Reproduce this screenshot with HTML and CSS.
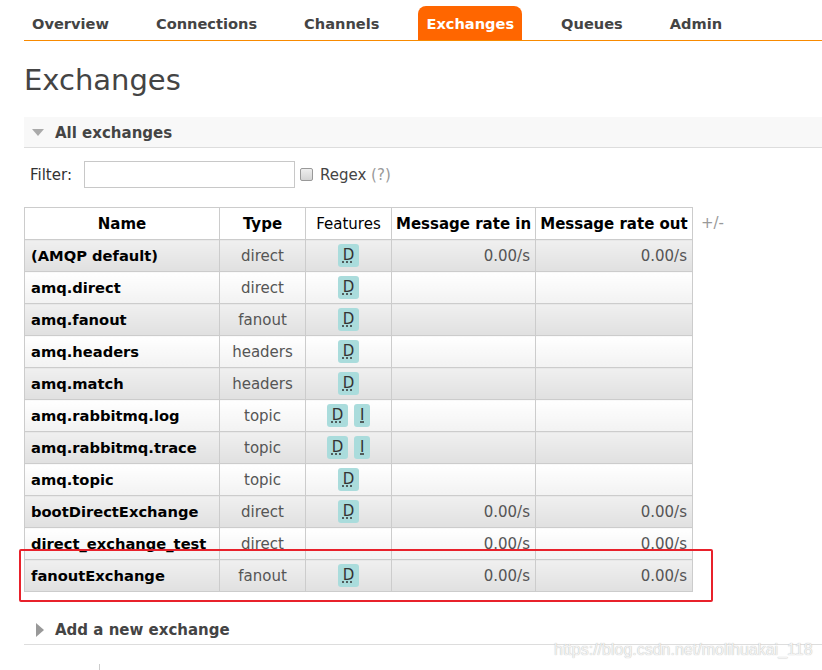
FILE: index.html
```html
<!DOCTYPE html>
<html>
<head>
<meta charset="utf-8">
<title>Exchanges</title>
<link rel="stylesheet" href="styles.css">
</head>
<body>
<div class="nav">
  <ul class="menu">
    <li><a class="menu-item">Overview</a></li>
    <li><a class="menu-item">Connections</a></li>
    <li><a class="menu-item">Channels</a></li>
    <li><a class="menu-item active">Exchanges</a></li>
    <li><a class="menu-item">Queues</a></li>
    <li><a class="menu-item">Admin</a></li>
  </ul>
</div>

<h1 class="title">Exchanges</h1>

<div class="section">
  <div class="section-head"><span class="tri-down"></span><span>All exchanges</span></div>
  <div class="filter">
    <label class="filter-label">Filter:</label>
    <input class="filter-input" type="text">
    <input class="checkbox" type="checkbox">
    <span class="regex">Regex <span class="help">(?)</span></span>
  </div>
  <div class="table-wrap">
    <table class="list">
      <colgroup>
        <col class="c-name"><col class="c-type"><col class="c-feat"><col class="c-in"><col class="c-out">
      </colgroup>
      <thead>
        <tr><th>Name</th><th>Type</th><th class="plain">Features</th><th>Message rate in</th><th>Message rate out</th></tr>
      </thead>
      <tbody>
        <tr class="alt1"><td class="name">(AMQP default)</td><td class="type">direct</td><td class="feat"><div class="badges"><span class="badge"><abbr>D</abbr></span></div></td><td class="rate">0.00/s</td><td class="rate">0.00/s</td></tr>
        <tr class="alt2"><td class="name">amq.direct</td><td class="type">direct</td><td class="feat"><div class="badges"><span class="badge"><abbr>D</abbr></span></div></td><td class="rate"></td><td class="rate"></td></tr>
        <tr class="alt1"><td class="name">amq.fanout</td><td class="type">fanout</td><td class="feat"><div class="badges"><span class="badge"><abbr>D</abbr></span></div></td><td class="rate"></td><td class="rate"></td></tr>
        <tr class="alt2"><td class="name">amq.headers</td><td class="type">headers</td><td class="feat"><div class="badges"><span class="badge"><abbr>D</abbr></span></div></td><td class="rate"></td><td class="rate"></td></tr>
        <tr class="alt1"><td class="name">amq.match</td><td class="type">headers</td><td class="feat"><div class="badges"><span class="badge"><abbr>D</abbr></span></div></td><td class="rate"></td><td class="rate"></td></tr>
        <tr class="alt2"><td class="name">amq.rabbitmq.log</td><td class="type">topic</td><td class="feat"><div class="badges"><span class="badge"><abbr>D</abbr></span><span class="badge"><abbr>I</abbr></span></div></td><td class="rate"></td><td class="rate"></td></tr>
        <tr class="alt1"><td class="name">amq.rabbitmq.trace</td><td class="type">topic</td><td class="feat"><div class="badges"><span class="badge"><abbr>D</abbr></span><span class="badge"><abbr>I</abbr></span></div></td><td class="rate"></td><td class="rate"></td></tr>
        <tr class="alt2"><td class="name">amq.topic</td><td class="type">topic</td><td class="feat"><div class="badges"><span class="badge"><abbr>D</abbr></span></div></td><td class="rate"></td><td class="rate"></td></tr>
        <tr class="alt1"><td class="name">bootDirectExchange</td><td class="type">direct</td><td class="feat"><div class="badges"><span class="badge"><abbr>D</abbr></span></div></td><td class="rate">0.00/s</td><td class="rate">0.00/s</td></tr>
        <tr class="alt2"><td class="name">direct_exchange_test</td><td class="type">direct</td><td class="feat"></td><td class="rate">0.00/s</td><td class="rate">0.00/s</td></tr>
        <tr class="alt1"><td class="name">fanoutExchange</td><td class="type">fanout</td><td class="feat"><div class="badges"><span class="badge"><abbr>D</abbr></span></div></td><td class="rate">0.00/s</td><td class="rate">0.00/s</td></tr>
      </tbody>
    </table>
    <span class="plusminus">+/-</span>
  </div>
</div>

<div class="section-head closed"><span class="tri-right"></span><span>Add a new exchange</span></div>
<div class="tick"></div>

<div class="highlight"></div>
<div class="watermark">https://blog.csdn.net/molihuakai_118</div>
</body>
</html>
```

FILE: styles.css
```css
* { box-sizing: border-box; }
html, body { margin: 0; padding: 0; background: #fff; }
body {
  font-family: "DejaVu Sans", Verdana, sans-serif;
  font-size: 15px;
  color: #444;
  width: 822px;
  height: 670px;
  overflow: hidden;
}

.nav {
  margin-left: 24px;
  padding-top: 6px;
  border-bottom: 1px solid #f88a00;
}
.menu { list-style: none; margin: 0; padding: 0; display: flex; gap: 31px; }
.menu-item {
  display: block;
  height: 34px;
  line-height: 34px;
  padding: 1px 8px 0 8px;
  font-size: 14.6px;
  font-weight: bold;
  color: #444;
  border-radius: 8px 8px 0 0;
}
.menu-item.active { background: #ff6600; color: #fff; }

.title {
  margin: 22px 0 0 24px;
  font-size: 29px;
  line-height: 34px;
  font-weight: normal;
  color: #444;
}

.section { margin: 20px 0 0 24px; }
.section-head {
  height: 31px;
  background: #f8f8f8;
  border-bottom: 1px solid #ddd;
  display: flex;
  align-items: center;
  padding-left: 8px;
  padding-top: 1px;
  font-weight: bold;
  color: #444;
}
.tri-down {
  width: 0; height: 0;
  border-left: 6px solid transparent;
  border-right: 6px solid transparent;
  border-top: 7px solid #aaa;
  margin-right: 11px;
}
.section-head.closed {
  margin: 22px 0 0 24px;
  background: #fff;
  padding-left: 12px;
}
.tri-right {
  width: 0; height: 0;
  border-top: 7px solid transparent;
  border-bottom: 7px solid transparent;
  border-left: 8px solid #999;
  margin-right: 11px;
}

.filter {
  margin-top: 13px;
  height: 27px;
  display: flex;
  align-items: center;
  padding-left: 6px;
  color: #333;
}
.filter-label { margin-right: 11px; }
.filter-input {
  width: 211px;
  height: 27px;
  border: 1px solid #c8c8c8;
  margin: 0 0 0 1px;
  padding: 0 4px;
  font: inherit;
}
.checkbox {
  appearance: none;
  -webkit-appearance: none;
  width: 13px;
  height: 13px;
  margin: 0 7px 0 5px;
  border: 1px solid #999;
  border-radius: 2px;
  background: linear-gradient(#eee, #d4d4d4);
}
.regex { color: #444; }
.help { color: #999; }

.table-wrap {
  margin-top: 19px;
  display: flex;
  align-items: flex-start;
  gap: 8px;
}
.list {
  border-collapse: collapse;
  table-layout: fixed;
  width: 668px;
}
.c-name { width: 195px; }
.c-type { width: 86px; }
.c-feat { width: 86px; }
.c-in { width: 144px; }
.c-out { width: 157px; }

.list th, .list td {
  border: 1px solid #ccc;
  height: 32px;
  line-height: 30px;
  padding: 1px 4px 0 4px;
  white-space: nowrap;
  overflow: hidden;
}
.list th {
  background: #fff;
  color: #000;
  font-weight: bold;
  text-align: center;
}
.list th.plain { font-weight: normal; }
.list tr.alt1 td { background: linear-gradient(#f0f0f0, #e0e0e0); }
.list tr.alt2 td { background: linear-gradient(#fff, #f2f2f2); }
.list td.name {
  text-align: left;
  padding-left: 6px;
  font-weight: bold;
  font-size: 14.7px;
  color: #000;
}
.list td.type { text-align: center; color: #555; }
.list td.rate { text-align: right; padding-right: 5px; color: #555; }
.list td.feat { text-align: center; padding-top: 0; }
.badges { display: flex; justify-content: center; align-items: center; gap: 6px; }
.badge {
  display: inline-block;
  min-width: 16px;
  height: 23px;
  line-height: 22px;
  padding: 0 5px;
  text-align: center;
  background: #aadcdc;
  border-radius: 3px;
  font-size: 15px;
  color: #333;
}
.badge abbr {
  text-decoration: underline dotted;
  text-underline-offset: 2px;
}

.plusminus { line-height: 32px; color: #999; }

.tick {
  width: 1px;
  height: 6px;
  background: #ccc;
  margin: 19px 0 0 99px;
}

.highlight {
  position: absolute;
  left: 19px;
  top: 549px;
  width: 694px;
  height: 53px;
  border: 2px solid #e8212b;
  border-radius: 2px;
}

.watermark {
  position: absolute;
  left: 554px;
  top: 640px;
  font-family: "Liberation Sans", Arial, sans-serif;
  font-size: 16px;
  line-height: 20px;
  color: #f3f3f3;
  text-shadow: 0 0 1px #aaa;
}
```
